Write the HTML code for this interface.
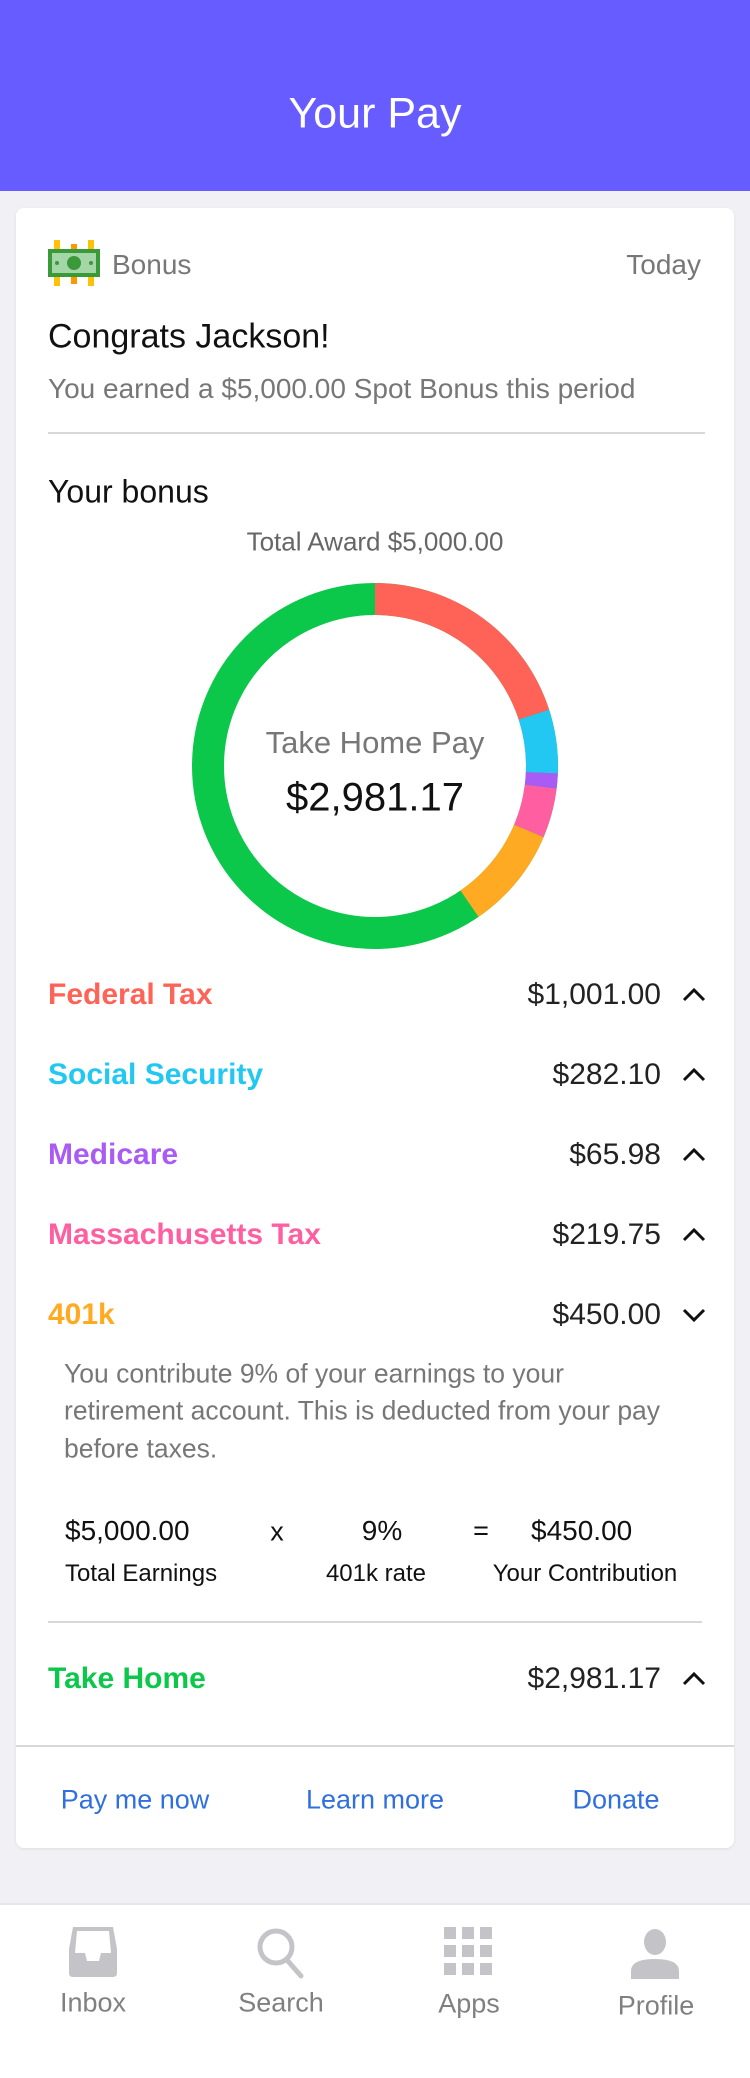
<!DOCTYPE html>
<html><head><meta charset="utf-8"><style>
*{margin:0;padding:0;box-sizing:border-box}
body{width:750px;height:2078px;background:#f0f0f5;font-family:"Liberation Sans",sans-serif;position:relative;overflow:hidden}
.a{position:absolute;white-space:nowrap}
.vc{transform:translateY(-50%)}
.cc{transform:translate(-50%,-50%)}
.row{position:absolute;left:48px;right:44px;height:40px;transform:translateY(-50%);font-size:30px}
.row .l{position:absolute;left:0;top:2px;font-weight:bold}
.row .r{position:absolute;right:45px;top:2px;color:#222}
.row svg{position:absolute;right:0;top:10px}
</style></head><body>
<div class="a" style="left:0;top:0;width:750px;height:191px;background:#665cff"></div>
<div class="a cc" style="left:375px;top:114px;color:#fff;font-size:43px">Your Pay</div>
<div class="a" style="left:16px;top:208px;width:718px;height:1640px;background:#fff;border-radius:8px;box-shadow:0 1px 3px rgba(0,0,0,.08)"></div>
<svg class="a" style="left:48px;top:240px" width="52" height="46" viewBox="0 0 52 46">
<rect x="6" y="0" width="6" height="46" fill="#ffc107"/><rect x="23" y="4" width="6" height="40" fill="#ff9800"/><rect x="40" y="0" width="6" height="46" fill="#ffc107"/>
<rect x="0" y="9" width="52" height="28" fill="#3a9a3a"/><rect x="4" y="13" width="44" height="20" fill="#a5d6a7"/>
<circle cx="26" cy="23" r="7" fill="#3a9a3a"/><circle cx="9" cy="23" r="2" fill="#3a9a3a"/><circle cx="43" cy="23" r="2" fill="#3a9a3a"/></svg>
<div class="a vc" style="left:112px;top:265px;font-size:28px;color:#777">Bonus</div>
<div class="a vc" style="right:49px;top:265px;font-size:28px;color:#777">Today</div>
<div class="a vc" style="left:48px;top:337px;font-size:34px;color:#111">Congrats Jackson!</div>
<div class="a vc" style="left:48px;top:389px;font-size:28px;color:#777">You earned a $5,000.00 Spot Bonus this period</div>
<div class="a" style="left:48px;top:432px;width:657px;height:2px;background:#d8d8dc"></div>
<div class="a vc" style="left:48px;top:492px;font-size:32px;color:#111">Your bonus</div>
<div class="a cc" style="left:375px;top:542px;font-size:26px;color:#666">Total Award $5,000.00</div>
<svg class="a" style="left:192px;top:583px" width="366" height="366" viewBox="0 0 366 366">
<g transform="rotate(-90 183 183)" fill="none" stroke-width="32">
<circle cx="183" cy="183" r="167" stroke="#0bc74a"/>
<circle cx="183" cy="183" r="167" stroke="#ff6257" stroke-dasharray="210 2000" stroke-dashoffset="0"/>
<circle cx="183" cy="183" r="167" stroke="#22c7f2" stroke-dasharray="59 2000" stroke-dashoffset="-210"/>
<circle cx="183" cy="183" r="167" stroke="#a95cf5" stroke-dasharray="14 2000" stroke-dashoffset="-269"/>
<circle cx="183" cy="183" r="167" stroke="#ff5fa0" stroke-dasharray="46 2000" stroke-dashoffset="-283"/>
<circle cx="183" cy="183" r="167" stroke="#ffaa22" stroke-dasharray="95 2000" stroke-dashoffset="-329"/>
</g></svg>
<div class="a cc" style="left:375px;top:743px;font-size:31px;color:#777">Take Home Pay</div>
<div class="a cc" style="left:375px;top:798px;font-size:40px;color:#111">$2,981.17</div>

<div class="row" style="top:996px"><span class="l" style="color:#ff6257">Federal Tax</span><span class="r">$1,001.00</span><svg width="24" height="16"><path d="M2 14 L12 4 L22 14" stroke="#111" stroke-width="3" fill="none"/></svg></div>
<div class="row" style="top:1076px"><span class="l" style="color:#22c7f2">Social Security</span><span class="r">$282.10</span><svg width="24" height="16"><path d="M2 14 L12 4 L22 14" stroke="#111" stroke-width="3" fill="none"/></svg></div>
<div class="row" style="top:1156px"><span class="l" style="color:#a95cf5">Medicare</span><span class="r">$65.98</span><svg width="24" height="16"><path d="M2 14 L12 4 L22 14" stroke="#111" stroke-width="3" fill="none"/></svg></div>
<div class="row" style="top:1236px"><span class="l" style="color:#ff5fa0">Massachusetts Tax</span><span class="r">$219.75</span><svg width="24" height="16"><path d="M2 14 L12 4 L22 14" stroke="#111" stroke-width="3" fill="none"/></svg></div>
<div class="row" style="top:1316px"><span class="l" style="color:#ffaa22">401k</span><span class="r">$450.00</span><svg width="24" height="16"><path d="M2 4 L12 14 L22 4" stroke="#111" stroke-width="3" fill="none"/></svg></div>

<div class="a vc" style="left:64px;top:1374px;font-size:26.5px;color:#777">You contribute 9% of your earnings to your</div>
<div class="a vc" style="left:64px;top:1411px;font-size:26.5px;color:#777">retirement account. This is deducted from your pay</div>
<div class="a vc" style="left:64px;top:1449px;font-size:26.5px;color:#777">before taxes.</div>

<div class="a vc" style="left:65px;top:1531px;font-size:28px;color:#111">$5,000.00</div>
<div class="a cc" style="left:277px;top:1532px;font-size:27px;color:#111">x</div>
<div class="a cc" style="left:382px;top:1531px;font-size:28px;color:#111">9%</div>
<div class="a cc" style="left:481px;top:1531px;font-size:27px;color:#111">=</div>
<div class="a vc" style="left:531px;top:1531px;font-size:28px;color:#111">$450.00</div>
<div class="a vc" style="left:65px;top:1574px;font-size:24px;color:#111">Total Earnings</div>
<div class="a cc" style="left:376px;top:1574px;font-size:24px;color:#111">401k rate</div>
<div class="a cc" style="left:585px;top:1574px;font-size:24px;color:#111">Your Contribution</div>
<div class="a" style="left:48px;top:1621px;width:654px;height:2px;background:#d8d8dc"></div>

<div class="row" style="top:1680px"><span class="l" style="color:#0bc74a">Take Home</span><span class="r">$2,981.17</span><svg width="24" height="16"><path d="M2 14 L12 4 L22 14" stroke="#111" stroke-width="3" fill="none"/></svg></div>

<div class="a" style="left:16px;top:1745px;width:718px;height:2px;background:#d8d8dc"></div>
<div class="a cc" style="left:135px;top:1800px;font-size:27px;color:#2f6fe0">Pay me now</div>
<div class="a cc" style="left:375px;top:1800px;font-size:27px;color:#2f6fe0">Learn more</div>
<div class="a cc" style="left:616px;top:1800px;font-size:27px;color:#2f6fe0">Donate</div>

<div class="a" style="left:0;top:1903px;width:750px;height:175px;background:#fff;border-top:2px solid #e6e6ea"></div>
<svg class="a" style="left:69px;top:1927px" width="48" height="50" viewBox="0 0 48 50"><path d="M4 0 H44 L48 22 V46 Q48 50 44 50 H4 Q0 50 0 46 V22 Z" fill="#c4c4c8"/><path d="M6 26 L8 4 H40 L42 26 H32 L30 34 H18 L16 26 Z" fill="#fff"/></svg>
<svg class="a" style="left:256px;top:1927px" width="50" height="52" viewBox="0 0 50 52"><circle cx="20" cy="20" r="16" stroke="#c4c4c8" stroke-width="5" fill="none"/><path d="M31 33 L45 49" stroke="#c4c4c8" stroke-width="5" stroke-linecap="round"/></svg>
<svg class="a" style="left:444px;top:1927px" width="48" height="48" viewBox="0 0 48 48"><g fill="#c4c4c8"><rect x="0" y="0" width="12" height="12"/><rect x="18" y="0" width="12" height="12"/><rect x="36" y="0" width="12" height="12"/><rect x="0" y="18" width="12" height="12"/><rect x="18" y="18" width="12" height="12"/><rect x="36" y="18" width="12" height="12"/><rect x="0" y="36" width="12" height="12"/><rect x="18" y="36" width="12" height="12"/><rect x="36" y="36" width="12" height="12"/></g></svg>
<svg class="a" style="left:631px;top:1929px" width="48" height="50" viewBox="0 0 48 50"><ellipse cx="24" cy="13" rx="11" ry="13" fill="#c4c4c8"/><path d="M0 50 V42 Q0 30 24 30 Q48 30 48 42 V50 Z" fill="#c4c4c8"/></svg>
<div class="a cc" style="left:93px;top:2003px;font-size:27px;color:#808080">Inbox</div>
<div class="a cc" style="left:281px;top:2003px;font-size:27px;color:#808080">Search</div>
<div class="a cc" style="left:469px;top:2004px;font-size:27px;color:#808080">Apps</div>
<div class="a cc" style="left:656px;top:2006px;font-size:27px;color:#808080">Profile</div>
</body></html>
